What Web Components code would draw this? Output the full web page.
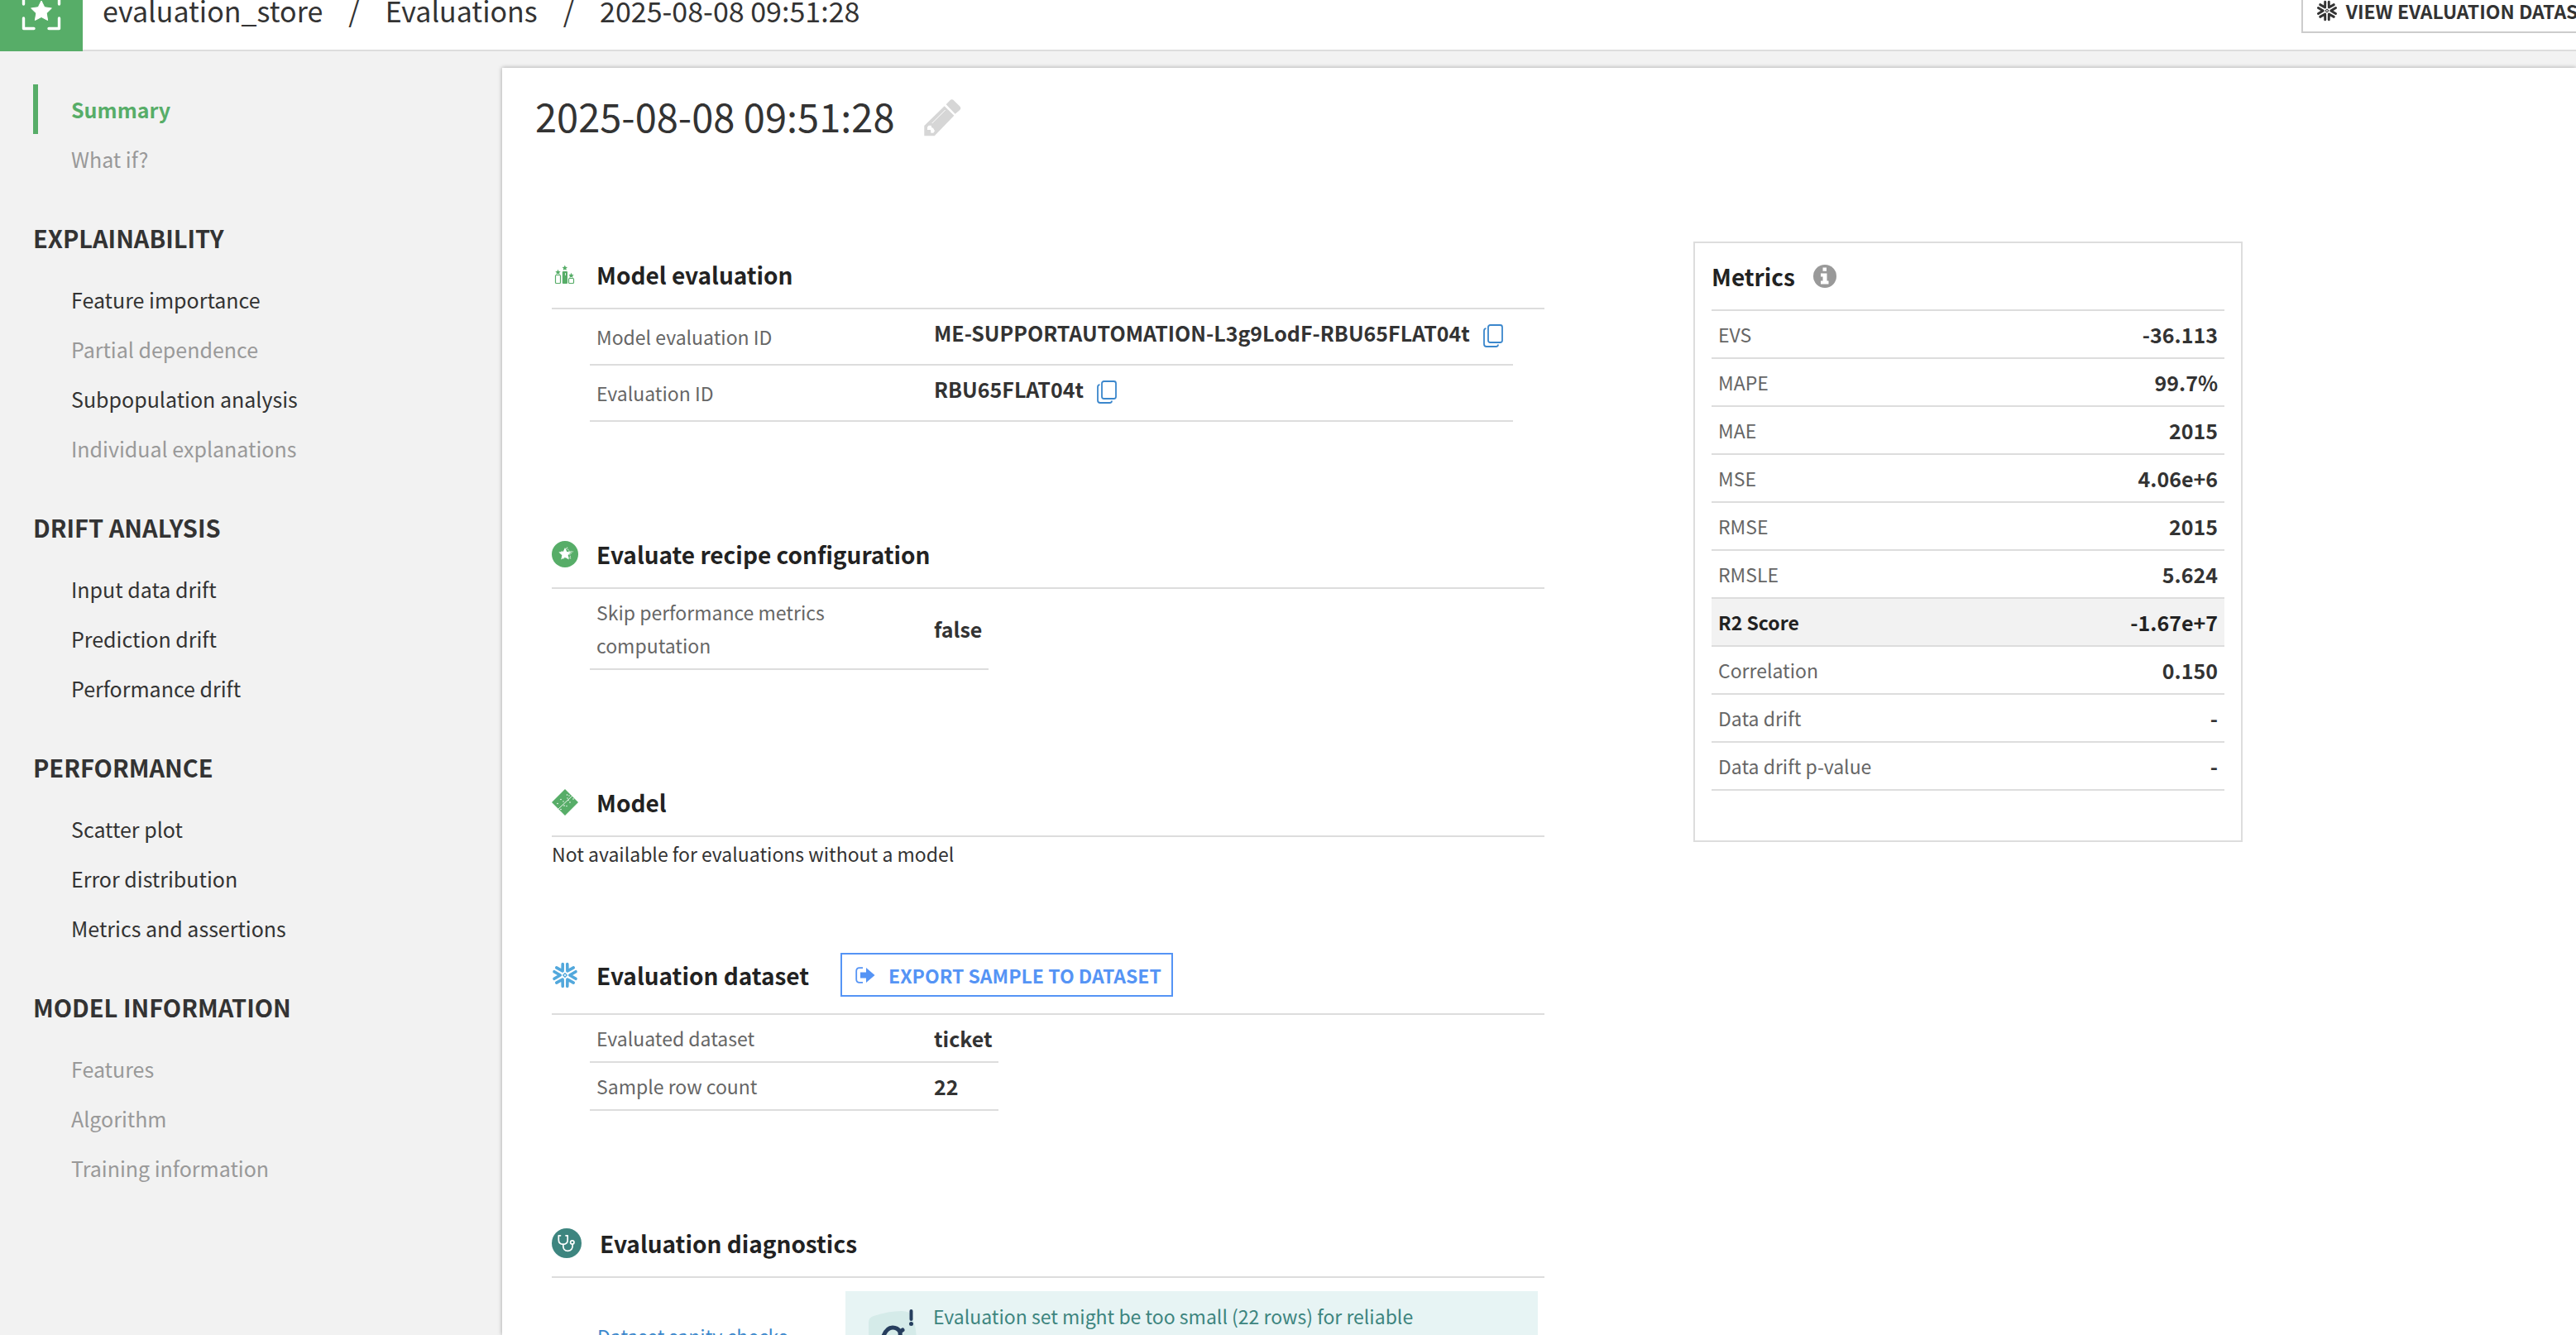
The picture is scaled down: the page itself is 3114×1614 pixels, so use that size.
<!DOCTYPE html>
<html lang="en">
<head>
<meta charset="utf-8">
<title>2025-08-08 09:51:28 - evaluation_store</title>
<style>
  html, body {
    margin: 0;
    height: 100%;
    overflow: hidden;
  }

  body {
    display: flex;
    flex-direction: column;
    background: #f2f2f2;
    color: #333;
    font-family: "Noto Sans CJK SC", "Noto Sans", sans-serif;
    font-size: 23px;
    line-height: 40px;
  }
</style>
</head>
<body>
  <eval-header>
    <a slot="crumb" href="#store">evaluation_store</a>
    <a slot="crumb" href="#evaluations">Evaluations</a>
    <a slot="crumb" href="#current">2025-08-08 09:51:28</a>
  </eval-header>

  <eval-layout>
    <side-nav slot="nav">
      <nav-group>
        <nav-item active>Summary</nav-item>
        <nav-item disabled>What if?</nav-item>
      </nav-group>
      <nav-group heading="EXPLAINABILITY">
        <nav-item>Feature importance</nav-item>
        <nav-item disabled>Partial dependence</nav-item>
        <nav-item>Subpopulation analysis</nav-item>
        <nav-item disabled>Individual explanations</nav-item>
      </nav-group>
      <nav-group heading="DRIFT ANALYSIS">
        <nav-item>Input data drift</nav-item>
        <nav-item>Prediction drift</nav-item>
        <nav-item>Performance drift</nav-item>
      </nav-group>
      <nav-group heading="PERFORMANCE">
        <nav-item>Scatter plot</nav-item>
        <nav-item>Error distribution</nav-item>
        <nav-item>Metrics and assertions</nav-item>
      </nav-group>
      <nav-group heading="MODEL INFORMATION">
        <nav-item disabled>Features</nav-item>
        <nav-item disabled>Algorithm</nav-item>
        <nav-item disabled>Training information</nav-item>
      </nav-group>
    </side-nav>

    <page-title slot="title">2025-08-08 09:51:28</page-title>

    <info-section icon="podium" heading="Model evaluation">
      <detail-table>
        <detail-row label="Model evaluation ID" value="ME-SUPPORTAUTOMATION-L3g9LodF-RBU65FLAT04t" copy></detail-row>
        <detail-row label="Evaluation ID" value="RBU65FLAT04t" copy></detail-row>
      </detail-table>
    </info-section>

    <info-section icon="recipe" heading="Evaluate recipe configuration">
      <detail-table>
        <detail-row label="Skip performance metrics computation" value="false"></detail-row>
      </detail-table>
    </info-section>

    <info-section icon="model" heading="Model" compact>Not available for evaluations without a model</info-section>

    <info-section icon="snowflake" heading="Evaluation dataset">
      <action-button slot="action" icon="export">EXPORT SAMPLE TO DATASET</action-button>
      <detail-table>
        <detail-row label="Evaluated dataset" value="ticket"></detail-row>
        <detail-row label="Sample row count" value="22"></detail-row>
      </detail-table>
    </info-section>

    <info-section icon="diagnostics" heading="Evaluation diagnostics">
      <diagnostic-item name="Dataset sanity checks">Evaluation set might be too small (22 rows) for reliable</diagnostic-item>
    </info-section>

    <metrics-card slot="aside"></metrics-card>
  </eval-layout>

<script>
  // Points of a five-branch star, used by several icons
  function star(cx, cy, r, inner = 0.48) {
    const points = [];
    for (let i = 0; i < 10; i++) {
      const radius = i % 2 ? r * inner : r;
      const angle = Math.PI * (i / 5 - 0.5);
      points.push((cx + radius * Math.cos(angle)).toFixed(2) + ',' + (cy + radius * Math.sin(angle)).toFixed(2));
    }
    return points.join(' ');
  }

  const snowflakeArms = [0, 60, 120, 180, 240, 300]
    .map(a => `<path d="M13 -4.3L5.8 0L13 4.3" transform="rotate(${a})"/>`)
    .join('');

  // name: [width, height, viewBox, content]
  const ICONS = {
    store: [50, 50, '0 0 50 50', `
      <g fill="none" stroke="#fff" stroke-width="3.4" stroke-linejoin="round" stroke-linecap="round">
        <path d="M3.5 17V3.5H16M34 3.5H46.5V17M46.5 34V46.5H34M16 46.5H3.5V34"/>
      </g>
      <polygon points="${star(25, 26, 13, 0.5)}" fill="#fff" stroke="#fff" stroke-linejoin="round"/>`],
    podium: [32, 32, '0 0 32 32', `
      <g fill="none" stroke="#57ad68" stroke-width="1.2">
        <rect x="4.5" y="16.5" width="6" height="10" rx="1"/>
        <rect x="20.5" y="20.5" width="6" height="6" rx="1"/>
      </g>
      <rect x="12.8" y="12" width="6.2" height="15" rx="1" fill="#57ad68"/>
      <path d="M16.5 14v3" stroke="#fff" stroke-width=".8"/>
      <g fill="#57ad68">
        <polygon points="${star(7.5, 13.2, 3.4)}"/>
        <polygon points="${star(15.8, 8, 3.4)}"/>
        <polygon points="${star(23.5, 17.2, 3.4)}"/>
      </g>`],
    recipe: [32, 32, '0 0 32 32', `
      <circle cx="16" cy="16" r="16" fill="#57ad68"/>
      <polygon points="${star(18.4, 15.2, 7.5)}" fill="none" stroke="#fff" stroke-width=".8" stroke-dasharray="1.6 .8"/>
      <polygon points="${star(16, 16, 8)}" fill="#fff"/>`],
    model: [32, 32, '0 0 32 32', `
      <path d="M16 0L32 16L16 32L0 16Z" fill="#57ad68"/>
      <path d="M8 24L24.5 8.5" stroke="#fff" stroke-width=".9"/>
      <g fill="#fff">
        <circle cx="7" cy="17.5" r=".8"/><circle cx="11" cy="12.5" r=".8"/><circle cx="14" cy="15" r=".7"/>
        <circle cx="18.5" cy="7" r=".8"/><circle cx="19" cy="11" r=".7"/><circle cx="21" cy="8" r=".7"/>
        <circle cx="22" cy="16" r=".8"/><circle cx="26" cy="12" r=".8"/><circle cx="20" cy="13.5" r=".7"/>
        <circle cx="15" cy="20" r=".8"/><circle cx="18" cy="20.5" r=".7"/><circle cx="11" cy="24.5" r=".8"/>
      </g>`],
    snowflake: [32, 32, '-16 -16 32 32', `
      <g fill="none" stroke="currentColor" stroke-width="3.6" stroke-linecap="round" stroke-linejoin="round">${snowflakeArms}</g>
      <path d="M0 -2.3L2.3 0L0 2.3L-2.3 0Z" fill="none" stroke="currentColor" stroke-width="1.3"/>`],
    diagnostics: [36, 36, '0 0 36 36', `
      <circle cx="18" cy="18" r="18" fill="#3d857f"/>
      <g fill="none" stroke="#fff" stroke-width="1.7" stroke-linecap="round" stroke-linejoin="round">
        <path d="M10.5 8.8H8.3V14C8.3 17.5 10.5 19.3 13.8 19.3S19.2 17.5 19.2 14V8.8H17"/>
        <path d="M13.8 19.3V21.5C13.8 25.5 16 27.3 19.5 27.3C23.5 27.3 25.5 24.5 25.2 19.5"/>
        <circle cx="24.8" cy="17" r="2.2"/>
      </g>`],
    export: [24, 20, '0 0 24 20', `
      <path d="M9 1.2H5Q1.2 1.2 1.2 5V15Q1.2 18.8 5 18.8H9" fill="none" stroke="currentColor" stroke-width="1.8"/>
      <path d="M6 6.5H13V1L23.5 10L13 19V13.5H6Z" fill="currentColor"/>`],
    copy: [24, 28, '0 0 24 28', `
      <g fill="none" stroke="#3b87cc" stroke-width="1.8">
        <rect x="6" y="1" width="17" height="21" rx="2.5"/>
        <path d="M3.5 5.2Q1 5.2 1 8V24Q1 27 4 27H15.5Q18 27 18 24.5"/>
      </g>`],
    info: [28, 28, '0 0 28 28', `
      <circle cx="14" cy="14" r="14" fill="#999"/>
      <path d="M11.5 3.5H16V7.8H11.5ZM9 10.5H16.5V19.5H18.5V23.5H9V19.5H11.5V14.5H9Z" fill="#fff"/>`],
    pencil: [45, 45, '0 0 135 135', `
      <g fill="#d6d6d6">
        <path d="M80 19L93 5Q101 -3 109 5L129 25Q137 33 129 40L113 53Z"/>
        <path d="M74 25L109 59L38 133H1V96Z"/>
      </g>
      <path d="M29 87L77 39" stroke="#fff" stroke-width="3"/>
      <path d="M17 95L12 101V111H24L25 122H34L39 115L33 104L28 103L26 95Z" fill="#fff"/>`],
    notice: [60, 76, '0 0 60 76', `
      <path d="M0 16Q0 10 6 8Q24 2 40 2Q50 2 52 8Q58 20 58 40V76H4Q0 60 0 16Z" fill="#d5ebe9"/>
      <path d="M18 32Q22 22 29 22Q35 22 38 27L41 25" fill="none" stroke="#263e5e" stroke-width="5" stroke-linecap="round"/>
      <path d="M17 34V44Q19 52 28 52T39 42L38 27" fill="none" stroke="#263e5e" stroke-width="5"/>
      <path d="M51.5 2V12" stroke="#263e5e" stroke-width="4" stroke-linecap="round"/>
      <circle cx="51.5" cy="17.5" r="2.5" fill="#263e5e"/>`]
  };

  class UiIcon extends HTMLElement {
    constructor() {
      super();
      this.attachShadow({ mode: 'open' });
    }

    connectedCallback() {
      const [width, height, viewBox, content] = ICONS[this.getAttribute('name')];
      this.shadowRoot.innerHTML = `
        <style>
          :host { display: inline-flex; flex: none; }
          svg { display: block; overflow: visible; }
        </style>
        <svg width="${this.getAttribute('size') || width}" height="${this.getAttribute('size') || height}" viewBox="${viewBox}" aria-hidden="true">${content}</svg>
      `;
    }
  }

  class ActionButton extends HTMLElement {
    constructor() {
      super();
      this.attachShadow({ mode: 'open' });
    }

    connectedCallback() {
      const size = this.hasAttribute('icon-size') ? `size="${this.getAttribute('icon-size')}"` : '';
      this.shadowRoot.innerHTML = `
        <style>
          :host { display: block; flex: none; color: #5594f5; --edge: #5594f5; }
          :host([neutral]) { color: #333; --edge: #ccc; }
          button {
            display: flex;
            align-items: center;
            gap: 16px;
            height: 53px;
            padding: 0 12px 0 16px;
            border: 2px solid var(--edge);
            background: #fff;
            color: inherit;
            font: inherit;
            font-weight: 600;
            white-space: nowrap;
          }
          :host([neutral]) button { gap: 10px; }
        </style>
        <button type="button"><ui-icon name="${this.getAttribute('icon')}" ${size}></ui-icon><slot></slot></button>
      `;
    }
  }

  class EvalHeader extends HTMLElement {
    constructor() {
      super();
      this.attachShadow({ mode: 'open' });
      // The bar is partly scrolled out of view, at the top and on the right
      this.shadowRoot.innerHTML = `
        <style>
          :host {
            display: flex;
            flex: none;
            align-items: center;
            height: 98px;
            margin-top: -36px;
            background: #fff;
            box-shadow: inset 0 -2px #ddd;
            overflow: hidden;
          }
          .logo {
            display: flex;
            align-items: center;
            justify-content: center;
            width: 100px;
            height: 100%;
            background: #57ad68;
          }
          nav {
            display: flex;
            flex: 1;
            padding-left: 24px;
            font-size: 34px;
          }
          ::slotted(a) { color: #333; text-decoration: none; }
          .actions { margin-right: -45px; }
        </style>
        <div class="logo"><ui-icon name="store"></ui-icon></div>
        <nav aria-label="Breadcrumb"><slot name="crumb"></slot></nav>
        <div class="actions"><action-button neutral icon="snowflake" icon-size="26">VIEW EVALUATION DATASET</action-button></div>
      `;
    }

    connectedCallback() {
      const crumbs = [...this.querySelectorAll('[slot=crumb]')];
      crumbs.slice(1).forEach(crumb => {
        const separator = document.createElement('span');
        separator.slot = 'crumb';
        separator.textContent = '/';
        separator.style.margin = '0 31px';
        crumb.before(separator);
      });
    }
  }

  class EvalLayout extends HTMLElement {
    constructor() {
      super();
      this.attachShadow({ mode: 'open' });
      this.shadowRoot.innerHTML = `
        <style>
          :host { display: flex; flex: 1; min-height: 0; }
          aside { flex: 0 0 607px; }
          main {
            flex: 1;
            min-width: 0;
            margin-top: 20px;
            padding: 28px 0 0 40px;
            background: #fff;
            box-shadow: 0 0 5px rgba(0, 0, 0, 0.35);
          }
          .content {
            display: flex;
            align-items: flex-start;
            gap: 180px;
            margin-top: 114px;
            padding-left: 20px;
          }
          .sections {
            display: flex;
            flex: 0 1 1200px;
            flex-direction: column;
            gap: 100px;
            padding-top: 20px;
          }
          .metrics { flex: 0 1 664px; }
        </style>
        <aside><slot name="nav"></slot></aside>
        <main>
          <slot name="title"></slot>
          <div class="content">
            <div class="sections"><slot></slot></div>
            <div class="metrics"><slot name="aside"></slot></div>
          </div>
        </main>
      `;
    }
  }

  class SideNav extends HTMLElement {
    constructor() {
      super();
      this.attachShadow({ mode: 'open' });
      this.shadowRoot.innerHTML = `
        <style>
          :host { display: block; }
          nav {
            display: flex;
            flex-direction: column;
            gap: 35px;
            padding: 40px;
          }
        </style>
        <nav><slot></slot></nav>
      `;
    }
  }

  class NavGroup extends HTMLElement {
    constructor() {
      super();
      this.attachShadow({ mode: 'open' });
    }

    connectedCallback() {
      const heading = this.getAttribute('heading');
      this.shadowRoot.innerHTML = `
        <style>
          :host { display: block; font-size: 25px; line-height: 60px; }
          h3 { margin: 0 0 15px; font-size: 29px; font-weight: 700; }
        </style>
        ${heading ? `<h3>${heading}</h3>` : ''}
        <slot></slot>
      `;
    }
  }

  class NavItem extends HTMLElement {
    constructor() {
      super();
      this.attachShadow({ mode: 'open' });
      this.shadowRoot.innerHTML = `
        <style>
          :host { display: block; }
          a {
            display: block;
            padding-left: 40px;
            border-left: 6px solid transparent;
            color: #333;
            text-decoration: none;
          }
          :host([disabled]) a { color: #999; }
          :host([active]) a {
            border-color: #57ad68;
            color: #57ad68;
            font-weight: 700;
          }
        </style>
        <a href="#"><slot></slot></a>
      `;
    }
  }

  class PageTitle extends HTMLElement {
    constructor() {
      super();
      this.attachShadow({ mode: 'open' });
      this.shadowRoot.innerHTML = `
        <style>
          :host { display: flex; align-items: center; gap: 36px; }
          h1 { margin: 0; padding-bottom: 8px; font-size: 47px; font-weight: 400; line-height: 60px; }
          button { padding: 0; border: 0; background: none; }
        </style>
        <h1><slot></slot></h1>
        <button type="button" aria-label="Rename"><ui-icon name="pencil"></ui-icon></button>
      `;
    }
  }

  class InfoSection extends HTMLElement {
    constructor() {
      super();
      this.attachShadow({ mode: 'open' });
    }

    connectedCallback() {
      this.shadowRoot.innerHTML = `
        <style>
          :host { display: block; margin-bottom: 40px; }
          :host([compact]) { margin-bottom: 0; }
          :host([icon=snowflake]) ui-icon { color: #52a8dc; }
          header {
            display: flex;
            align-items: center;
            padding-bottom: 20px;
            border-bottom: 2px solid #ddd;
          }
          h2 {
            margin: 0 38px 0 22px;
            color: #222;
            font-size: 28px;
            font-weight: 600;
          }
        </style>
        <header>
          <ui-icon name="${this.getAttribute('icon')}"></ui-icon>
          <h2>${this.getAttribute('heading')}</h2>
          <slot name="action"></slot>
        </header>
        <slot></slot>
      `;
    }
  }

  // Holds the label and the value of one line of a detail-table
  class DetailRow extends HTMLElement {
    get label() {
      return this.getAttribute('label');
    }

    get value() {
      return this.getAttribute('value');
    }

    get copy() {
      return this.hasAttribute('copy');
    }
  }

  class DetailTable extends HTMLElement {
    constructor() {
      super();
      this.attachShadow({ mode: 'open' });
    }

    connectedCallback() {
      const rows = [...this.querySelectorAll('detail-row')].map(row => `
        <tr>
          <th scope="row">${row.label}</th>
          <td>${row.copy ? `
            <div class="copyable">
              <span>${row.value}</span>
              <button type="button" aria-label="Copy ${row.label}"><ui-icon name="copy"></ui-icon></button>
            </div>` : row.value}</td>
        </tr>`);
      this.shadowRoot.innerHTML = `
        <style>
          :host { display: block; padding-left: 46px; }
          table { border-collapse: separate; border-spacing: 0; }
          th, td {
            padding: 8px;
            border-bottom: 2px solid #ddd;
            text-align: left;
          }
          th { width: 392px; color: #666; font-weight: 400; }
          td { font-size: 25px; font-weight: 700; }
          .copyable {
            display: flex;
            align-items: center;
            gap: 16px;
            padding-right: 4px;
          }
          .copyable span { padding-bottom: 10px; }
          button { padding: 0; border: 0; background: none; }
        </style>
        <table>${rows.join('')}</table>
      `;
    }
  }

  class DiagnosticItem extends HTMLElement {
    constructor() {
      super();
      this.attachShadow({ mode: 'open' });
    }

    connectedCallback() {
      this.shadowRoot.innerHTML = `
        <style>
          :host { display: flex; align-items: center; padding: 16px 8px 0 55px; }
          a { flex: 0 0 300px; color: #3b87cc; text-decoration: none; }
          .callout {
            display: flex;
            flex: 1;
            align-items: flex-start;
            gap: 18px;
            min-height: 88px;
            padding: 10px 28px;
            background: #e7f4f4;
            color: #3d857f;
          }
          ui-icon { padding-top: 12px; }
        </style>
        <a href="#">${this.getAttribute('name')}</a>
        <div class="callout"><ui-icon name="notice"></ui-icon><slot></slot></div>
      `;
    }
  }

  const METRICS = [
    ['EVS', '-36.113'],
    ['MAPE', '99.7%'],
    ['MAE', '2015'],
    ['MSE', '4.06e+6'],
    ['RMSE', '2015'],
    ['RMSLE', '5.624'],
    ['R2 Score', '-1.67e+7', true],
    ['Correlation', '0.150'],
    ['Data drift', '-'],
    ['Data drift p-value', '-']
  ];

  class MetricsCard extends HTMLElement {
    constructor() {
      super();
      this.attachShadow({ mode: 'open' });
      this.shadowRoot.innerHTML = `
        <style>
          :host {
            display: block;
            padding: 20px 20px 60px;
            border: 2px solid #ddd;
          }
          header {
            display: flex;
            align-items: center;
            gap: 22px;
            padding-bottom: 20px;
            border-bottom: 2px solid #ddd;
          }
          h2 { margin: 0; color: #222; font-size: 28px; font-weight: 600; }
          table { width: 100%; border-collapse: separate; border-spacing: 0; }
          th, td { padding: 8px; border-bottom: 2px solid #ddd; }
          th { color: #666; font-weight: 400; text-align: left; }
          td { font-size: 25px; font-weight: 700; text-align: right; }
          .main > * { background: #f2f2f2; color: #222; font-weight: 700; }
        </style>
        <header><h2>Metrics</h2><ui-icon name="info"></ui-icon></header>
        <table>
          ${METRICS.map(([name, value, main]) => `
            <tr${main ? ' class="main"' : ''}><th scope="row">${name}</th><td>${value}</td></tr>`).join('')}
        </table>
      `;
    }
  }

  customElements.define('ui-icon', UiIcon);
  customElements.define('action-button', ActionButton);
  customElements.define('eval-header', EvalHeader);
  customElements.define('eval-layout', EvalLayout);
  customElements.define('side-nav', SideNav);
  customElements.define('nav-group', NavGroup);
  customElements.define('nav-item', NavItem);
  customElements.define('page-title', PageTitle);
  customElements.define('info-section', InfoSection);
  customElements.define('detail-row', DetailRow);
  customElements.define('detail-table', DetailTable);
  customElements.define('diagnostic-item', DiagnosticItem);
  customElements.define('metrics-card', MetricsCard);
</script>
</body>
</html>
